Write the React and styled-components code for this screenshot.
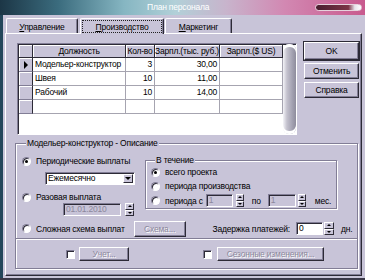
import styled, { createGlobalStyle } from "styled-components";

const FACE = "#c8c4d8";
const SHADOW = "#827e96";
const DARK = "#2c2a36";

const GlobalStyle = createGlobalStyle`
  html, body {
    margin: 0;
    padding: 0;
    background: ${FACE};
  }
  body {
    font-family: "Liberation Sans", Arial, sans-serif;
    font-size: 8.5px;
    letter-spacing: -0.2px;
    color: #000;
  }
  * {
    box-sizing: border-box;
  }
`;

const Window = styled.div`
  width: 365px;
  height: 280px;
  display: flex;
  flex-direction: column;
  background: ${FACE};
  border-bottom: 2px solid #3a3848;
  overflow: hidden;
`;

const TitleBar = styled.div`
  height: 15px;
  display: flex;
  align-items: center;
  padding-left: 147px;
  color: #fff;
  background: linear-gradient(
    90deg,
    #1c3646 0%,
    #3b6c7e 16%,
    #86b6c2 34%,
    #b2d0d8 48%,
    #c8b4cc 62%,
    #d288b2 78%,
    #c85a8e 100%
  );
`;

const TitleText = styled.span`
  line-height: 15px;
`;

const TitlePill = styled.span`
  margin-left: auto;
  margin-right: 3px;
  width: 47px;
  height: 7px;
  border-radius: 4px;
  border: 1px solid #e6d2dc;
  background: linear-gradient(90deg, #4a1e30 0%, #7a3446 72%, #e8e4ea 86%, #ffffff 100%);
`;

const Body = styled.div`
  flex: 1;
  display: flex;
  flex-direction: column;
  border-left: 3px solid #23465a;
  padding: 2px 3px 2px 2px;
`;

const TabStrip = styled.div`
  height: 16px;
  display: flex;
  align-items: flex-end;
  position: relative;
  z-index: 1;
`;

const Tab = styled.div`
  width: ${({ $w }) => $w}px;
  margin-left: ${({ $ml }) => $ml || 0}px;
  height: ${({ $active }) => ($active ? 16 : 15)}px;
  margin-bottom: ${({ $active }) => ($active ? -1 : 0)}px;
  background: ${FACE};
  border-top: 1px solid #fff;
  border-left: 1px solid #fff;
  border-right: 1px solid ${DARK};
  border-radius: 2px 2px 0 0;
  box-shadow: inset -1px 0 0 ${SHADOW};
  display: flex;
  align-items: center;
  justify-content: center;
  padding: 1px;

  span {
    display: block;
    width: 100%;
    height: 100%;
    line-height: 12px;
    text-align: center;
    border: 1px dotted ${({ $active }) => ($active ? "#222" : "transparent")};
  }
`;

const Panel = styled.div`
  flex: 1;
  display: flex;
  flex-direction: column;
  border-top: 1px solid #fff;
  border-left: 1px solid #fff;
  border-right: 1px solid ${DARK};
  border-bottom: 1px solid ${DARK};
  box-shadow: inset -1px -1px 0 ${SHADOW};
  padding: 9px 0 0 11px;
`;

const TopRow = styled.div`
  display: flex;
  align-items: flex-start;
`;

const GridFrame = styled.div`
  width: 280px;
  height: 92px;
  display: flex;
  border-top: 1px solid ${SHADOW};
  border-left: 1px solid ${SHADOW};
  border-right: 1px solid #fff;
  border-bottom: 1px solid #fff;
  box-shadow: inset 1px 1px 0 ${DARK};
  padding: 1px 0 0 1px;
  background: #fff;
`;

const Table = styled.div`
  flex: 1;
  display: grid;
  grid-template-columns: 14px 93px 29px 65px 63px;
  grid-auto-rows: 14px;
  grid-template-rows: 13px;
  align-content: start;
  background: #fff;
`;

const HeadCell = styled.div`
  background: ${FACE};
  border-right: 1px solid ${DARK};
  border-bottom: 1px solid ${DARK};
  box-shadow: inset 1px 1px 0 #fff;
  text-align: center;
  line-height: 12px;
  white-space: nowrap;
  overflow: hidden;
`;

const Cell = styled.div`
  border-right: 1px solid #a6a4b0;
  border-bottom: 1px solid #a6a4b0;
  padding: 0 2px;
  line-height: 13px;
  text-align: ${({ $right }) => ($right ? "right" : "left")};
  white-space: nowrap;
  overflow: hidden;
`;

const IndicatorCell = styled.div`
  background: ${FACE};
  border-right: 1px solid ${DARK};
  border-bottom: 1px solid ${SHADOW};
  box-shadow: inset 1px 1px 0 #fff;
  display: flex;
  align-items: center;
  justify-content: center;

  &::after {
    content: "";
    display: ${({ $current }) => ($current ? "block" : "none")};
    border-left: 4px solid #000;
    border-top: 4px solid transparent;
    border-bottom: 4px solid transparent;
  }
`;

const ScrollBar = styled.div`
  width: 13px;
  margin: -1px 0 0 0;
  border-radius: 6px;
  background: linear-gradient(90deg, #f4f4f8 0%, #c4c2ce 30%, #a4a2b2 70%, #8e8c9c 100%);
  box-shadow: inset 0 3px 0 #fff, inset 0 -3px 0 #fff;
`;

const ButtonColumn = styled.div`
  margin-left: 7px;
  display: flex;
  flex-direction: column;
  gap: 3px;
  margin-top: -1px;
`;

const Button = styled.button`
  width: ${({ $w }) => $w || 55}px;
  height: ${({ $h }) => $h || 16}px;
  margin-left: ${({ $ml }) => $ml || 0}px;
  padding: 0;
  font: inherit;
  letter-spacing: inherit;
  background: ${FACE};
  color: ${({ disabled }) => (disabled ? "#8c889c" : "#000")};
  text-shadow: ${({ disabled }) => (disabled ? "1px 1px 0 #fff" : "none")};
  border-top: 1px solid #fff;
  border-left: 1px solid #fff;
  border-right: 1px solid ${DARK};
  border-bottom: 1px solid ${DARK};
  box-shadow: inset -1px -1px 0 ${SHADOW};
  outline: ${({ $default }) => ($default ? `1px solid ${DARK}` : "none")};
  outline-offset: 0;
`;

const GroupBox = styled.fieldset`
  width: 343px;
  margin: 3px 0 0 -2px;
  padding: 0 0 7px 6px;
  min-inline-size: 0;
  border: 1px solid ${SHADOW};
  box-shadow: inset 1px 1px 0 #fff, 1px 1px 0 #fff;
`;

const Legend = styled.legend`
  padding: 0 1px;
  margin-left: 4px;
  line-height: 11px;
  background: ${FACE};
`;

const Upper = styled.div`
  display: flex;
  align-items: flex-start;
`;

const LeftCol = styled.div`
  width: 123px;
  display: flex;
  flex-direction: column;
`;

const Row = styled.div`
  display: flex;
  align-items: center;
  height: ${({ $h }) => $h || 12}px;
  margin-top: ${({ $mt }) => $mt || 0}px;
  margin-left: ${({ $ml }) => $ml || 0}px;
`;

const Radio = styled.span`
  flex: none;
  width: 9px;
  height: 9px;
  border-radius: 50%;
  background: #fff;
  border: 1px solid;
  border-color: ${SHADOW} #fff #fff ${SHADOW};
  box-shadow: inset 1px 1px 0 ${DARK};
  display: flex;
  align-items: center;
  justify-content: center;

  &::after {
    content: "";
    display: ${({ $checked }) => ($checked ? "block" : "none")};
    width: 3px;
    height: 3px;
    border-radius: 50%;
    background: #000;
  }
`;

const Check = styled.span`
  flex: none;
  width: 9px;
  height: 9px;
  margin-left: ${({ $ml }) => $ml || 0}px;
  background: #fff;
  border: 1px solid;
  border-color: ${SHADOW} #fff #fff ${SHADOW};
  box-shadow: inset 1px 1px 0 ${DARK};
`;

const Label = styled.span`
  margin-left: ${({ $ml }) => ($ml === undefined ? 5 : $ml)}px;
  line-height: 12px;
  white-space: nowrap;
`;

const Field = styled.div`
  width: ${({ $w }) => $w}px;
  height: 13px;
  margin-left: ${({ $ml }) => $ml || 0}px;
  background: ${({ $disabled }) => ($disabled ? FACE : "#fff")};
  color: ${({ $disabled }) => ($disabled ? "#8c889c" : "#000")};
  border: 1px solid;
  border-color: ${SHADOW} #fff #fff ${SHADOW};
  box-shadow: inset 1px 1px 0 ${DARK};
  padding: 0 2px;
  line-height: 11px;
  display: flex;
  align-items: center;
  justify-content: space-between;
  white-space: nowrap;
`;

const DropButton = styled.span`
  width: 10px;
  height: 9px;
  margin-right: -1px;
  background: ${FACE};
  border-top: 1px solid #fff;
  border-left: 1px solid #fff;
  border-right: 1px solid ${DARK};
  border-bottom: 1px solid ${DARK};
  display: flex;
  align-items: center;
  justify-content: center;

  &::after {
    content: "";
    border-top: 3px solid #000;
    border-left: 3px solid transparent;
    border-right: 3px solid transparent;
  }
`;

const Spin = styled.div`
  width: ${({ $w }) => $w || 8}px;
  height: 13px;
  margin-left: ${({ $ml }) => $ml || 0}px;
  display: flex;
  flex-direction: column;
`;

const SpinHalf = styled.span`
  flex: 1;
  background: ${FACE};
  border-top: 1px solid #fff;
  border-left: 1px solid #fff;
  border-right: 1px solid ${DARK};
  border-bottom: 1px solid ${DARK};
  display: flex;
  align-items: center;
  justify-content: center;

  &::after {
    content: "";
    border-left: 2px solid transparent;
    border-right: 2px solid transparent;
    ${({ $down }) =>
      $down ? "border-top: 2px solid #000;" : "border-bottom: 2px solid #000;"}
  }
`;

const InnerGroup = styled.fieldset`
  width: 192px;
  margin: 6px 0 0 0;
  padding: 0 0 1px 5px;
  min-inline-size: 0;
  border: 1px solid ${SHADOW};
  box-shadow: inset 1px 1px 0 #fff, 1px 1px 0 #fff;
`;

const Separator = styled.div`
  height: 2px;
  margin: 1px 0 0 -6px;
  border-top: 1px solid ${SHADOW};
  border-bottom: 1px solid #fff;
`;

const Text = styled.span`
  margin-left: ${({ $ml }) => $ml || 0}px;
  white-space: nowrap;
`;

const GridRow = styled.div`
  display: contents;
`;

function SpinBox({ w, ml }) {
  return (
    <Spin $w={w} $ml={ml}>
      <SpinHalf />
      <SpinHalf $down />
    </Spin>
  );
}

const rows = [
  { name: "Модельер-конструктор", qty: "3", rub: "30,00", current: true },
  { name: "Швея", qty: "10", rub: "11,00" },
  { name: "Рабочий", qty: "10", rub: "14,00" },
  { name: "", qty: "", rub: "" },
];

export default function App() {
  return (
    <>
      <GlobalStyle />
      <Window>
        <TitleBar>
          <TitleText>План персонала</TitleText>
          <TitlePill />
        </TitleBar>
        <Body>
          <TabStrip>
            <Tab $w={72} $ml={1}>
              <span>
                <u>У</u>правление
              </span>
            </Tab>
            <Tab $w={84} $ml={2} $active>
              <span>
                <u>П</u>роизводство
              </span>
            </Tab>
            <Tab $w={67} $ml={1}>
              <span>
                <u>М</u>аркетинг
              </span>
            </Tab>
          </TabStrip>
          <Panel>
            <TopRow>
              <GridFrame>
                <Table>
                  <HeadCell />
                  <HeadCell>Должность</HeadCell>
                  <HeadCell>Кол-во</HeadCell>
                  <HeadCell>Зарпл.(тыс. руб.)</HeadCell>
                  <HeadCell>Зарпл.($ US)</HeadCell>
                  {rows.map((r, i) => (
                    <GridRow key={i}>
                      <IndicatorCell $current={r.current} />
                      <Cell>{r.name}</Cell>
                      <Cell $right>{r.qty}</Cell>
                      <Cell $right>{r.rub}</Cell>
                      <Cell />
                    </GridRow>
                  ))}
                </Table>
                <ScrollBar />
              </GridFrame>
              <ButtonColumn>
                <Button $default $h={18}>
                  OK
                </Button>
                <Button>Отменить</Button>
                <Button>Справка</Button>
              </ButtonColumn>
            </TopRow>

            <GroupBox>
              <Legend>Модельер-конструктор - Описание</Legend>
              <Upper>
                <LeftCol>
                  <Row $mt={6}>
                    <Radio $checked />
                    <Label>Периодические выплаты</Label>
                  </Row>
                  <Row $mt={5} $h={13} $ml={23}>
                    <Field $w={90}>
                      Ежемесячно
                      <DropButton />
                    </Field>
                  </Row>
                  <Row $mt={6}>
                    <Radio />
                    <Label>Разовая выплата</Label>
                  </Row>
                  <Row $h={13} $ml={41}>
                    <Field $w={58} $disabled>
                      01.01.2010
                    </Field>
                    <SpinBox w={9} ml={4} />
                  </Row>
                </LeftCol>
                <InnerGroup>
                  <Legend>В течение</Legend>
                  <Row>
                    <Radio $checked />
                    <Label>всего проекта</Label>
                  </Row>
                  <Row $mt={2}>
                    <Radio />
                    <Label>периода производства</Label>
                  </Row>
                  <Row $mt={2} $h={13}>
                    <Radio />
                    <Label>периода с</Label>
                    <Field $w={27} $ml={3} $disabled>
                      1
                    </Field>
                    <SpinBox w={8} ml={3} />
                    <Text $ml={8}>по</Text>
                    <Field $w={28} $ml={7} $disabled>
                      1
                    </Field>
                    <SpinBox w={8} ml={2} />
                    <Text $ml={9}>мес.</Text>
                  </Row>
                </InnerGroup>
              </Upper>

              <Row $mt={4} $h={17}>
                <Radio />
                <Label>Сложная схема выплат</Label>
                <Button $w={52} $h={16} $ml={9} disabled>
                  Схема...
                </Button>
                <Text $ml={27}>Задержка платежей:</Text>
                <Field $w={27} $ml={6}>
                  0
                </Field>
                <SpinBox w={10} ml={1} />
                <Text $ml={7}>дн.</Text>
              </Row>
              <Separator />
              <Row $mt={7} $h={14}>
                <Check $ml={44} />
                <Button $w={50} $h={14} $ml={4} disabled>
                  Учет...
                </Button>
                <Check $ml={74} />
                <Button $w={107} $h={14} $ml={5} disabled>
                  Сезонные изменения...
                </Button>
              </Row>
            </GroupBox>
          </Panel>
        </Body>
      </Window>
    </>
  );
}
